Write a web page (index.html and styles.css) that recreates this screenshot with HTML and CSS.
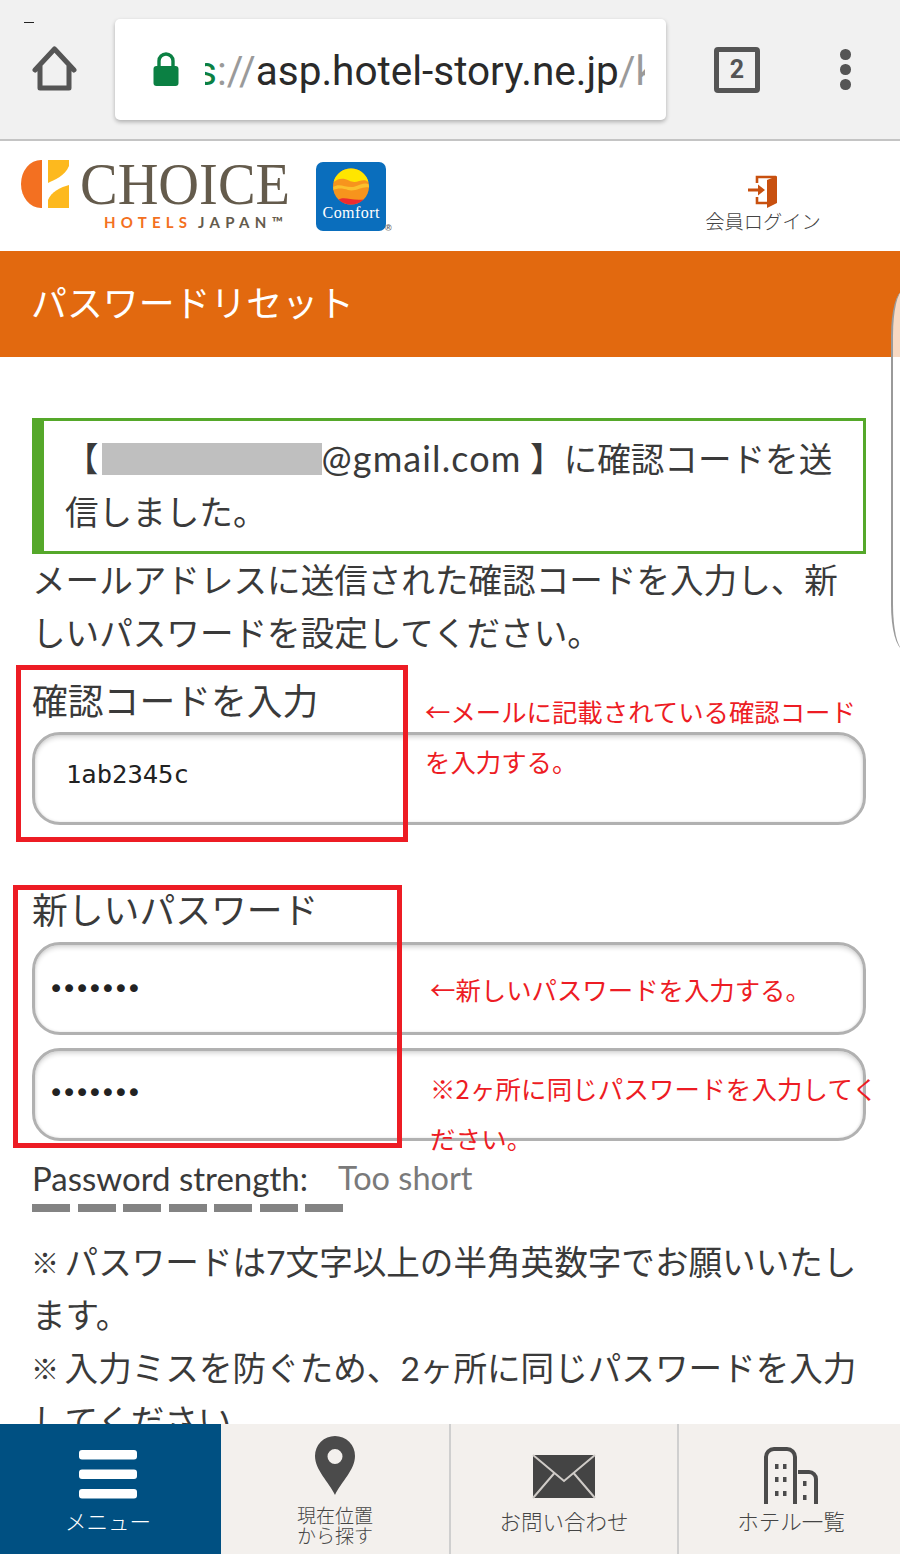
FILE: index.html
```html
<!DOCTYPE html>
<html lang="ja">
<head>
<meta charset="utf-8">
<title>パスワードリセット</title>
<link rel="stylesheet" href="styles.css">
</head>
<body>
<div class="page">
  <header class="browser">
    <span class="status-dash"></span>
    <svg class="home-icon" width="46" height="46" viewBox="0 0 46 46"><path d="M3 24 L22.5 3 L42 24 M8 20 V42 H37 V20" fill="none" stroke="#555" stroke-width="5" stroke-linejoin="round" stroke-linecap="round"/></svg>
    <div class="url-box">
      <svg class="lock-icon" width="26" height="35" viewBox="0 0 26 35"><rect x="0.5" y="14" width="25" height="20" rx="3" fill="#0b8043"/><path d="M6 15 V9 a7 7 0 0 1 14 0 V15" fill="none" stroke="#0b8043" stroke-width="3.4"/></svg>
      <div class="url-clip"><div class="url-text"><span class="url-s">s</span><span class="url-dim">://</span>asp.hotel-story.ne.jp<span class="url-dim">/k</span></div></div>
    </div>
    <div class="tab-count">2</div>
    <div class="kebab"><span></span><span></span><span></span></div>
  </header>

  <div class="site-header">
    <svg class="logo" width="380" height="90" viewBox="0 0 380 90">
      <path d="M21 0 H20 A20 24 0 0 0 0 24 A20 24 0 0 0 20 48 H21 Z" fill="#f37021"/>
      <path d="M27 0 H48 V6 C44 16 33 20 27 23 Z" fill="#fdb91e"/>
      <path d="M48 25 V48 H27 V40 C30 32 40 27 48 25 Z" fill="#fdb91e"/>
      <text x="59" y="44" class="logo-choice" textLength="210" lengthAdjust="spacingAndGlyphs">CHOICE</text>
      <text x="83" y="68" class="logo-hotels" textLength="86">HOTELS</text>
      <text x="177" y="68" class="logo-japan" textLength="88">JAPAN™</text>
      <rect x="295" y="2" width="70" height="69" rx="7" fill="#0a6ebd"/>
      <circle cx="330" cy="26.5" r="18" fill="#f7941d"/>
      <path d="M312.6 22 A18 18 0 0 1 347.4 22 C341 17 336 25 328 20.5 C322 17.5 317 18.5 312.6 22Z" fill="#ffe600"/>
      <path d="M312.2 27 C319 22 326 29 334 26.5 C339 25 344 22 347.8 24.5 L348 27.5 C341 26 335 32 327 30 C322 28 316 28 312.4 30Z" fill="#fbc02d"/>
      <path d="M317.5 39.5 C324 36 330 41 342.5 39.5 A18 18 0 0 1 317.5 39.5Z" fill="#ed2b2f"/>
      <text x="330" y="58" class="logo-comfort" text-anchor="middle" textLength="57">Comfort</text>
      <text x="364" y="71" class="logo-reg">®</text>
    </svg>
    <div class="login">
      <svg width="30" height="34" viewBox="0 0 30 34"><path d="M9 8 V2 H28 M9 22 V28 H20" fill="none" stroke="#c8500f" stroke-width="2.6"/><path d="M29 1 L19 5 V33 L29 28Z" fill="#c8500f"/><rect x="0" y="13.5" width="12" height="3" fill="#c8500f"/><path d="M10 9.5 L17 15 L10 20.5Z" fill="#c8500f"/></svg>
      <span class="login-label">会員ログイン</span>
    </div>
  </div>

  <h1 class="title-bar">パスワードリセット</h1>

  <main class="content">
    <div class="message">【<span class="redacted"></span><span class="email">@gmail.com</span> 】に確認コードを送信しました。</div>
    <p class="lead">メールアドレスに送信された確認コードを入力し、新しいパスワードを設定してください。</p>

    <label class="field-label">確認コードを入力</label>
    <input class="field field-code" type="text" value="1ab2345c">

    <label class="field-label field-label-new">新しいパスワード</label>
    <input class="field field-pass" type="password" value="1234567">
    <input class="field field-pass field-second" type="password" value="1234567">

    <div class="strength"><span>Password strength:</span><span class="strength-value">Too short</span></div>
    <div class="meter"><i></i><i></i><i></i><i></i><i></i><i></i><i></i></div>

    <p class="notes"><span class="kome">※</span> パスワードは7文字以上の半角英数字でお願いいたします。<br><span class="kome">※</span> 入力ミスを防ぐため、2ヶ所に同じパスワードを入力してください。</p>
  </main>

  <nav class="bottom-nav">
    <a class="nav-item nav-menu">
      <svg class="nav-slot" width="100" height="88" viewBox="0 0 100 88"><rect x="21" y="26" width="58" height="9.5" rx="3" fill="#fff"/><rect x="21" y="45.5" width="58" height="9.5" rx="3" fill="#fff"/><rect x="21" y="65" width="58" height="9.5" rx="3" fill="#fff"/></svg>
      <span class="nav-label">メニュー</span>
    </a>
    <a class="nav-item nav-near">
      <svg class="nav-slot" width="100" height="88" viewBox="0 0 100 88"><path fill-rule="evenodd" d="M50 71 C44 58 30 46 30 32 A20 20 0 0 1 70 32 C70 46 56 58 50 71Z M50 25 A7.5 7.5 0 1 0 50 40 A7.5 7.5 0 1 0 50 25Z" fill="#4b4b4b"/></svg>
      <span class="nav-label nav-label-two">現在位置<br>から探す</span>
    </a>
    <a class="nav-item">
      <svg class="nav-slot" width="100" height="88" viewBox="0 0 100 88"><rect x="19" y="31" width="62" height="43" fill="#444"/><path d="M19 31 L50 57 L81 31 M19 74 L40 49.5 M81 74 L60 49.5" fill="none" stroke="#cfcbc7" stroke-width="2"/></svg>
      <span class="nav-label">お問い合わせ</span>
    </a>
    <a class="nav-item nav-hotels">
      <svg class="nav-slot" width="100" height="88" viewBox="0 0 100 88"><path d="M25 80 V33 a8 8 0 0 1 8-8 H46 a8 8 0 0 1 8 8 V80 M57 48 H68 a7 7 0 0 1 7 7 V80" fill="none" stroke="#4b4b4b" stroke-width="4"/><g fill="#4b4b4b"><rect x="34" y="40" width="3.5" height="5"/><rect x="42" y="40" width="3.5" height="5"/><rect x="34" y="53" width="3.5" height="5"/><rect x="42" y="53" width="3.5" height="5"/><rect x="34" y="67" width="3.5" height="5"/><rect x="42" y="67" width="3.5" height="5"/><rect x="62" y="57" width="3.5" height="5"/><rect x="62" y="71" width="3.5" height="5"/></g></svg>
      <span class="nav-label">ホテル一覧</span>
    </a>
  </nav>

  <div class="edge-panel"></div>
  <div class="mark mark-code"></div>
  <div class="mark mark-pass"></div>
  <p class="note note-code">←メールに記載されている確認コードを入力する。</p>
  <p class="note note-pass">←新しいパスワードを入力する。</p>
  <p class="note note-same">※2ヶ所に同じパスワードを入力してください。</p>
</div>
</body>
</html>
```
FILE: styles.css
```css
* { box-sizing: border-box; }
html, body { margin: 0; padding: 0; background: #fff; }
.page {
  position: relative;
  width: 900px;
  height: 1554px;
  overflow: hidden;
  display: flex;
  flex-direction: column;
  font-family: Lato, "Noto Sans CJK JP", sans-serif;
  font-weight: 400;
  color: #3a3a3a;
}

/* browser chrome */
.browser {
  position: relative;
  flex: 0 0 141px;
  display: flex;
  align-items: flex-start;
  background: #f1f1f1;
  border-bottom: 2px solid #c4c4c4;
}
.status-dash { position: absolute; left: 24px; top: 22px; width: 10px; height: 1px; background: #222; }
.home-icon { margin: 46px 0 0 32px; }
.url-box {
  margin: 19px 0 0 37px;
  width: 551px;
  height: 101px;
  padding-left: 38px;
  display: flex;
  align-items: center;
  background: #fff;
  border-radius: 5px;
  box-shadow: 0 2px 4px rgba(0,0,0,.28);
}
.lock-icon { flex: none; margin-top: -1px; }
.url-clip { margin-left: 26px; width: 440px; overflow: hidden; }
.url-text {
  margin: 2px 0 0 -9px;
  font: 400 40.5px/60px Roboto, sans-serif;
  color: #2a2a2a;
  white-space: nowrap;
}
.url-s { color: #0b8043; }
.url-dim { color: #9a9a9a; }
.tab-count {
  margin: 47px 0 0 48px;
  width: 46px;
  height: 46px;
  border: 5px solid #555;
  border-radius: 4px;
  font: 700 25px/35px Roboto, sans-serif;
  text-align: center;
  color: #555;
}
.kebab { margin: 49px 0 0 80px; display: flex; flex-direction: column; gap: 4.5px; }
.kebab span { width: 10.5px; height: 10.5px; border-radius: 50%; background: #555; }

/* site header */
.site-header {
  flex: 0 0 110px;
  position: relative;
  display: flex;
  justify-content: space-between;
  padding: 19px 0 0 21px;
  background: #fff;
}
.logo { display: block; }
.logo-choice { font: 400 60px "Liberation Serif", serif; fill: #645b4c; }
.logo-hotels { font: 700 15px "Lato", sans-serif; fill: #f37021; letter-spacing: 3px; }
.logo-japan { font: 700 15px "Lato", sans-serif; fill: #645b4c; letter-spacing: 3px; }
.logo-comfort { font: 400 16px "Liberation Serif", serif; fill: #fff; }
.logo-reg { font: 700 9px "Liberation Sans", sans-serif; fill: #666; }
.login {
  width: 120px;
  margin: 15px 77px 0 0;
  display: flex;
  flex-direction: column;
  align-items: center;
}
.login-label { font: 300 19.3px/24px "Noto Sans CJK JP", sans-serif; color: #444; white-space: nowrap; }

/* title */
.title-bar {
  flex: 0 0 106px;
  margin: 0;
  padding-left: 31px;
  background: #e2690f;
  color: #fff;
  font-size: 35.9px;
  font-weight: 400;
  line-height: 106px;
}

/* main */
.content {
  flex: 1;
  min-height: 0;
  overflow: hidden;
  padding: 61px 34px 0 32px;
  font-size: 33.6px;
  line-height: 53px;
}
.message {
  padding: 12px 21px 12px 21px;
  border: 3px solid #55a82a;
  border-left-width: 12px;
}
.redacted {
  display: inline-block;
  width: 220px;
  height: 32px;
  margin-left: 3px;
  vertical-align: -3px;
  background: #bfbfbf;
}
.email { font-size: 36px; line-height: 1; letter-spacing: 1.1px; }
.lead { margin: 0 0 15px; }
.field-label { display: block; margin-bottom: 4px; font-size: 35.8px; }
.field-label-new { margin-top: 59px; margin-bottom: 5px; }
.field {
  display: block;
  width: 100%;
  height: 93px;
  border: 3px solid #b1b1b1;
  border-radius: 28px;
  background: #fff;
  box-shadow: inset 0 3px 4px rgba(0,0,0,.13), inset 0 0 3px rgba(0,0,0,.1);
  outline: none;
  color: #222;
  font-family: "DejaVu Sans Mono", monospace;
}
.field-code { padding: 0 0 10px 31px; font-size: 25.5px; }
.field-pass { padding: 0 0 0 13px; font-size: 27px; letter-spacing: -3.3px; }
.field-second { margin-top: 13px; padding: 0 0 4px 13px; }
.strength {
  margin-top: 17px;
  display: flex;
  gap: 30px;
  font-size: 33px;
  line-height: 40px;
}
.strength-value { color: #7a7a7a; font-size: 32.5px; }
.meter { margin-top: 6px; display: flex; gap: 7.5px; }
.meter i { width: 38px; height: 8px; background: #838383; }
.notes { margin: 24px 0 0; }
.kome { font-size: 28px; line-height: 1; font-weight: 700; vertical-align: 1px; margin: 0 -3px 0 -1px; }

/* bottom nav */
.bottom-nav {
  flex: 0 0 130px;
  display: grid;
  grid-template-columns: 221px 228px 228px 223px;
  background: #f3f0ed;
  color: #444;
}
.nav-item {
  display: flex;
  flex-direction: column;
  align-items: center;
  border-left: 2px solid #cfcfcf;
  font-size: 21.5px;
  line-height: 20px;
  font-weight: 300;
}
.nav-menu { background: #005082; color: #fff; border-left: 0; padding-right: 5px; }
.nav-near { border-left: 0; }
.nav-hotels { padding-left: 3px; }
.nav-slot { flex: none; display: block; }
.nav-label { white-space: nowrap; }
.nav-label-two { margin-top: -6px; font-size: 19px; line-height: 19.5px; text-align: center; }

/* overlays */
.edge-panel {
  position: absolute;
  left: 891px;
  top: 291px;
  width: 30px;
  height: 358px;
  border-left: 2px solid #9a9a9a;
  border-radius: 12px 0 0 12px / 45px 0 0 45px;
  background: rgba(255,255,255,.75);
}
.mark { position: absolute; border: 5px solid #ed1c24; }
.mark-code { left: 16px; top: 665px; width: 392px; height: 177px; }
.mark-pass { left: 13px; top: 885px; width: 389px; height: 263px; }
.note {
  position: absolute;
  margin: 0;
  color: #ed1c24;
  font-family: "Noto Sans CJK JP", sans-serif;
  font-size: 25.4px;
  font-weight: 400;
  line-height: 50px;
}
.note-code { left: 425px; top: 686px; width: 440px; }
.note-pass { left: 430px; top: 964px; width: 440px; }
.note-same { left: 430px; top: 1063px; width: 450px; letter-spacing: .2px; }
```
